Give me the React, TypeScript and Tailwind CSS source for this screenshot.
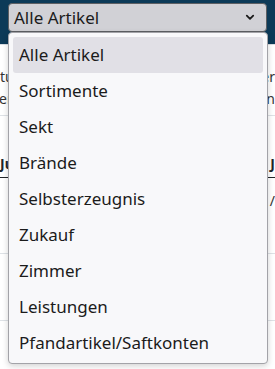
const options = [
  "Alle Artikel",
  "Sortimente",
  "Sekt",
  "Brände",
  "Selbsterzeugnis",
  "Zukauf",
  "Zimmer",
  "Leistungen",
  "Pfandartikel/Saftkonten",
];

function Chevron() {
  return (
    <svg width="10" height="7" viewBox="0 0 10 7" fill="none" className="shrink-0">
      <path d="M1.8 1.6 5 4.8 8.2 1.6" stroke="#1a1a1a" strokeWidth="1.8" strokeLinecap="round" strokeLinejoin="round" />
    </svg>
  );
}

export default function App() {
  return (
    <div className="relative h-[369px] w-[275px] overflow-hidden bg-white font-['Noto_Sans','Open_Sans',sans-serif] text-[#1b1b1b]">
      {/* header bar with the select */}
      <div className="h-[45px] border-b border-[#d9dde2] bg-[#0c3a58] px-2 pt-[3px]">
        <div className="flex h-[29px] items-center justify-between rounded-[4px] border border-[#5d5f63] bg-[#d1d1d6] pl-[5px] pr-[11px]">
          <span className="text-[17px] leading-none">Alle Artikel</span>
          <Chevron />
        </div>
      </div>

      {/* page content behind the open list */}
      <div className="text-[14px] text-[#333]">
        <div className="flex justify-between border-b border-[#dee2e6] pb-[5px] pt-[21px] leading-[22px]">
          <div>
            <div>tus</div>
            <div className="-ml-[1px]">er</div>
          </div>
          <div className="text-right">
            <div>er</div>
            <div>n</div>
          </div>
        </div>
        <div className="flex justify-between border-b border-[#212529] pb-[3px] pt-[38px] font-bold leading-[20px] text-[#212529]">
          <span>Ju:</span>
          <span>J</span>
        </div>
        <div className="flex h-[76px] justify-end border-b border-[#dee2e6] pt-[13px] leading-[20px]">
          <span>/</span>
        </div>
        <div className="h-[67px] border-b border-[#dee2e6]" />
      </div>

      {/* open dropdown list */}
      <div className="absolute left-2 top-[32px] w-[260px] rounded-[4px] border border-[#a3a3a8] bg-[#f8f8fa] px-1 pb-0.5 pt-1 shadow-[0_2px_6px_rgba(0,0,0,0.18)]">
        {options.map((opt, i) => (
          <div
            key={opt}
            className={
              i === 0
                ? "flex h-9 items-center rounded-[3px] bg-[#e1e0e6] pl-[6px] text-[17px]"
                : "flex h-9 items-center pl-[6px] text-[17px]"
            }
          >
            {opt}
          </div>
        ))}
      </div>
    </div>
  );
}
